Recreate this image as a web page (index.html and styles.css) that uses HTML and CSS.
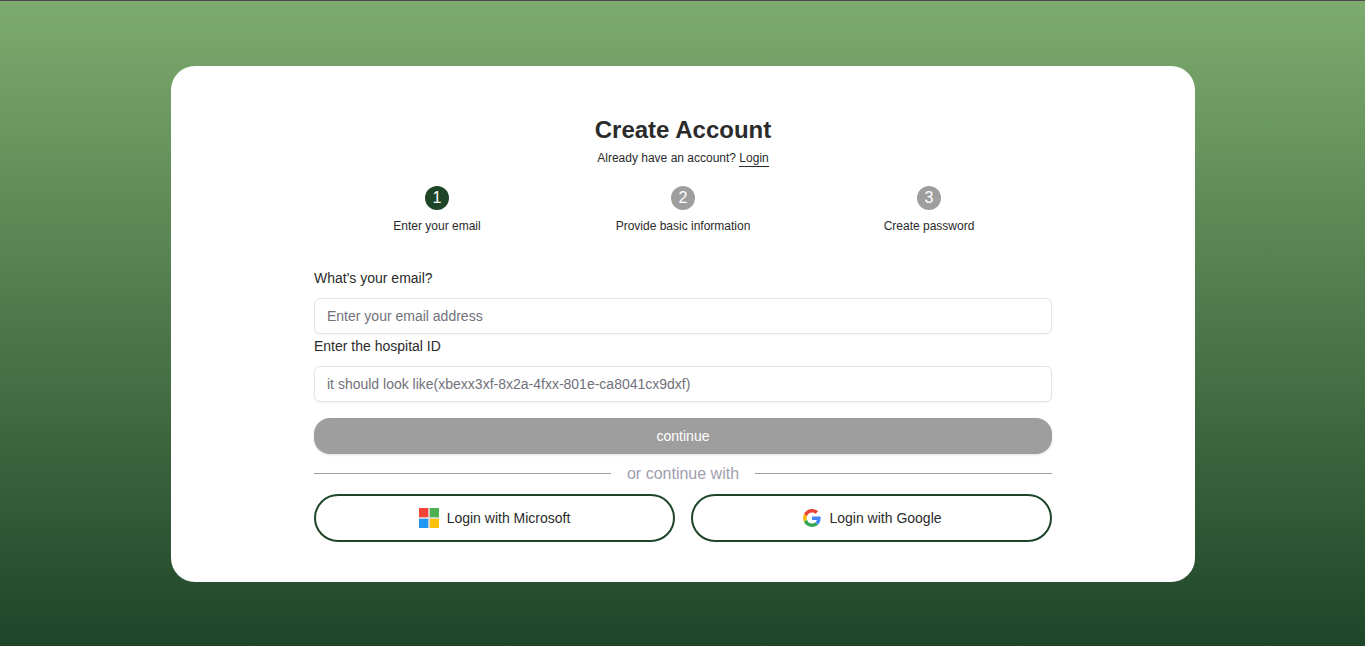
FILE: index.html
```html
<!DOCTYPE html>
<html lang="en">
<head>
<meta charset="utf-8">
<title>Create Account</title>
<link rel="stylesheet" href="styles.css">
</head>
<body>
<main class="card">
  <header class="heading">
    <h1>Create Account</h1>
    <p>Already have an account? <a class="login-link" href="#">Login</a></p>
  </header>
  <ol class="steps">
    <li class="step active"><span class="step-number">1</span><span>Enter your email</span></li>
    <li class="step"><span class="step-number">2</span><span>Provide basic information</span></li>
    <li class="step"><span class="step-number">3</span><span>Create password</span></li>
  </ol>
  <form class="form">
    <label for="email">What's your email?</label>
    <input id="email" type="text" placeholder="Enter your email address">
    <label for="hospital">Enter the hospital ID</label>
    <input id="hospital" type="text" placeholder="it should look like(xbexx3xf-8x2a-4fxx-801e-ca8041cx9dxf)">
    <button class="continue" type="button">continue</button>
  </form>
  <div class="divider">or continue with</div>
  <div class="providers">
    <button class="provider microsoft" type="button">
      <svg width="20" height="20" viewBox="0 0 20 20"><path fill="#e0e0e0" d="M0 0h20v20H0z"/><path fill="#f44336" d="M0 0h9.2v9.2H0z"/><path fill="#4caf50" d="M10.8 0H20v9.2h-9.2z"/><path fill="#2196f3" d="M0 10.8h9.2V20H0z"/><path fill="#ffc107" d="M10.8 10.8H20V20h-9.2z"/></svg>
      <span>Login with Microsoft</span>
    </button>
    <button class="provider google" type="button">
      <svg width="18" height="18" viewBox="0 0 48 48"><path fill="#EA4335" d="M24 9.5c3.54 0 6.71 1.22 9.21 3.6l6.85-6.85C35.9 2.38 30.47 0 24 0 14.62 0 6.51 5.38 2.56 13.22l7.98 6.19C12.43 13.72 17.74 9.5 24 9.5z"/><path fill="#4285F4" d="M46.98 24.55c0-1.57-.15-3.09-.38-4.55H24v9.02h12.94c-.58 2.96-2.26 5.48-4.78 7.18l7.73 6c4.51-4.18 7.09-10.36 7.09-17.65z"/><path fill="#FBBC05" d="M10.53 28.59A14.5 14.5 0 0 1 9.77 24c0-1.6.27-3.14.76-4.59l-7.98-6.19A23.9 23.9 0 0 0 0 24c0 3.88.92 7.54 2.56 10.78l7.97-6.19z"/><path fill="#34A853" d="M24 48c6.48 0 11.93-2.13 15.89-5.81l-7.73-6C30.01 37.64 27.24 38.5 24 38.5c-6.26 0-11.57-4.22-13.47-9.91l-7.98 6.19C6.51 42.62 14.62 48 24 48z"/></svg>
      <span>Login with Google</span>
    </button>
  </div>
</main>
</body>
</html>
```
FILE: styles.css
```css
* { box-sizing: border-box; margin: 0; padding: 0; }
body {
  height: 646px;
  padding-top: 65px;
  border-top: 1px solid #4a4a50;
  background: linear-gradient(#7eab6e, #1e4528) padding-box;
  font-family: "Liberation Sans", Arial, sans-serif;
  color: #2b2b2b;
  overflow: hidden;
}
.card {
  width: 1024px;
  height: 516px;
  margin-left: 171px;
  padding: 48px 143px 0;
  border-radius: 24px;
  background: #fff;
}
.heading { text-align: center; }
h1 { font-size: 24px; line-height: 32px; }
.heading p { margin-top: 4px; font-size: 12px; line-height: 16px; }
.login-link { color: inherit; text-decoration: none; border-bottom: 1px solid #2b2b2b; padding-bottom: 1px; }
.steps { display: flex; margin-top: 20px; list-style: none; }
.step { flex: 1; display: flex; flex-direction: column; align-items: center; gap: 8px; font-size: 12px; line-height: 16px; }
.step-number { width: 24px; height: 24px; border-radius: 50%; background: #9e9e9e; color: #fff; font-size: 16px; line-height: 24px; text-align: center; }
.active .step-number { background: #1e4528; }
.form { display: flex; flex-direction: column; margin-top: 32px; font-size: 14px; }
.form label { line-height: 24px; }
.form input {
  height: 36px;
  margin-top: 8px;
  padding: 4px 12px;
  border: 1px solid #e4e4e7;
  border-radius: 6px;
  box-shadow: 0 1px 2px rgba(0, 0, 0, .05);
  font: 14px/20px "Liberation Sans", Arial, sans-serif;
}
.form input::placeholder { color: #71717a; }
.continue {
  height: 36px;
  margin-top: 16px;
  border: 0;
  border-radius: 16px;
  background: #9e9e9e;
  box-shadow: 0 1px 3px rgba(0, 0, 0, .1), 0 1px 2px -1px rgba(0, 0, 0, .1);
  color: #fff;
  font: 14px/20px "Liberation Sans", Arial, sans-serif;
}
.divider { display: flex; align-items: center; gap: 16px; height: 24px; margin-top: 8px; color: #9e9eae; font-size: 16px; line-height: 24px; }
.divider::before, .divider::after { content: ""; flex: 1; height: 1px; margin-bottom: 2px; background: #9e9ea6; }
.providers { display: grid; grid-template-columns: 1fr 1fr; gap: 16px; margin-top: 8px; }
.provider {
  display: flex;
  align-items: center;
  justify-content: center;
  gap: 8px;
  height: 48px;
  border: 2px solid #1e4528;
  border-radius: 24px;
  background: #fff;
  color: #2b2b2b;
  font: 14px/20px "Liberation Sans", Arial, sans-serif;
}
.google { padding-left: 2px; }
```
